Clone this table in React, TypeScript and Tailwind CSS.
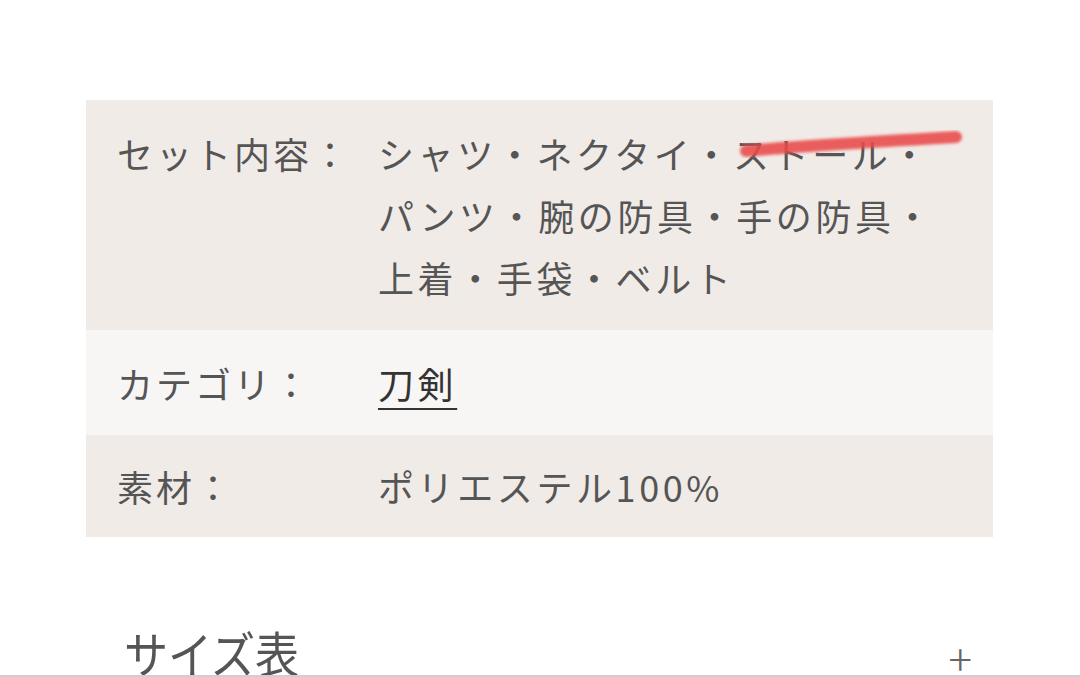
const rows = [
  {
    label: "セット内容：",
    lines: ["シャツ・ネクタイ・ストール・", "パンツ・腕の防具・手の防具・", "上着・手袋・ベルト"],
    cls: "bg-[#f1ebe7] py-[22px]",
  },
  { label: "カテゴリ：", link: "刀剣", cls: "bg-[#f8f6f5] pt-[22px] pb-[21px]" },
  { label: "素材：", lines: ["ポリエステル100%"], cls: "bg-[#f1ebe7] pt-[20px] pb-[20px]" },
];

export default function App() {
  return (
    <div
      className="relative h-[677px] w-[1080px] overflow-hidden bg-white text-[#555]"
      style={{ fontFamily: '"Noto Sans CJK JP", "Noto Sans", sans-serif' }}
    >
      <div className="pt-[100px] pl-[86px]">
        <div className="w-[907px]">
          {rows.map((row) => (
            <div key={row.label} className={`flex ${row.cls}`}>
              <div className="w-[292px] shrink-0 pl-[31px] text-[36px] leading-[62px] tracking-[3px]">
                {row.label}
              </div>
              <div className="text-[36px] leading-[62px] tracking-[3.6px]">
                {row.link ? (
                  <a className="text-[#333] underline underline-offset-[9px] decoration-[2px]">
                    {row.link}
                  </a>
                ) : (
                  row.lines!.map((l) => <div key={l}>{l}</div>)
                )}
              </div>
            </div>
          ))}
        </div>
      </div>

      <div className="mt-[96px] flex items-start justify-between pl-[124px] pr-[108px]">
        <div className="-mt-[5px] text-[49px] leading-[48px] text-[#555] origin-left scale-x-[0.9]">サイズ表</div>
        <div className="mt-[2px] text-[44px] font-extralight leading-[44px] text-[#666]">+</div>
      </div>

      <div className="absolute bottom-0 left-0 h-[2px] w-full bg-[#cfcfcf]" />

      <svg className="pointer-events-none absolute left-[730px] top-[122px]" width="240" height="40" viewBox="0 0 240 40">
        <defs>
          <filter id="blur" x="-10%" y="-50%" width="120%" height="200%">
            <feGaussianBlur stdDeviation="1.6" />
          </filter>
        </defs>
        <path
          d="M16 29 C 70 24, 140 20, 226 15"
          stroke="#e8494a"
          strokeOpacity="0.88"
          strokeWidth="12"
          strokeLinecap="round"
          fill="none"
          filter="url(#blur)"
        />
      </svg>
    </div>
  );
}
